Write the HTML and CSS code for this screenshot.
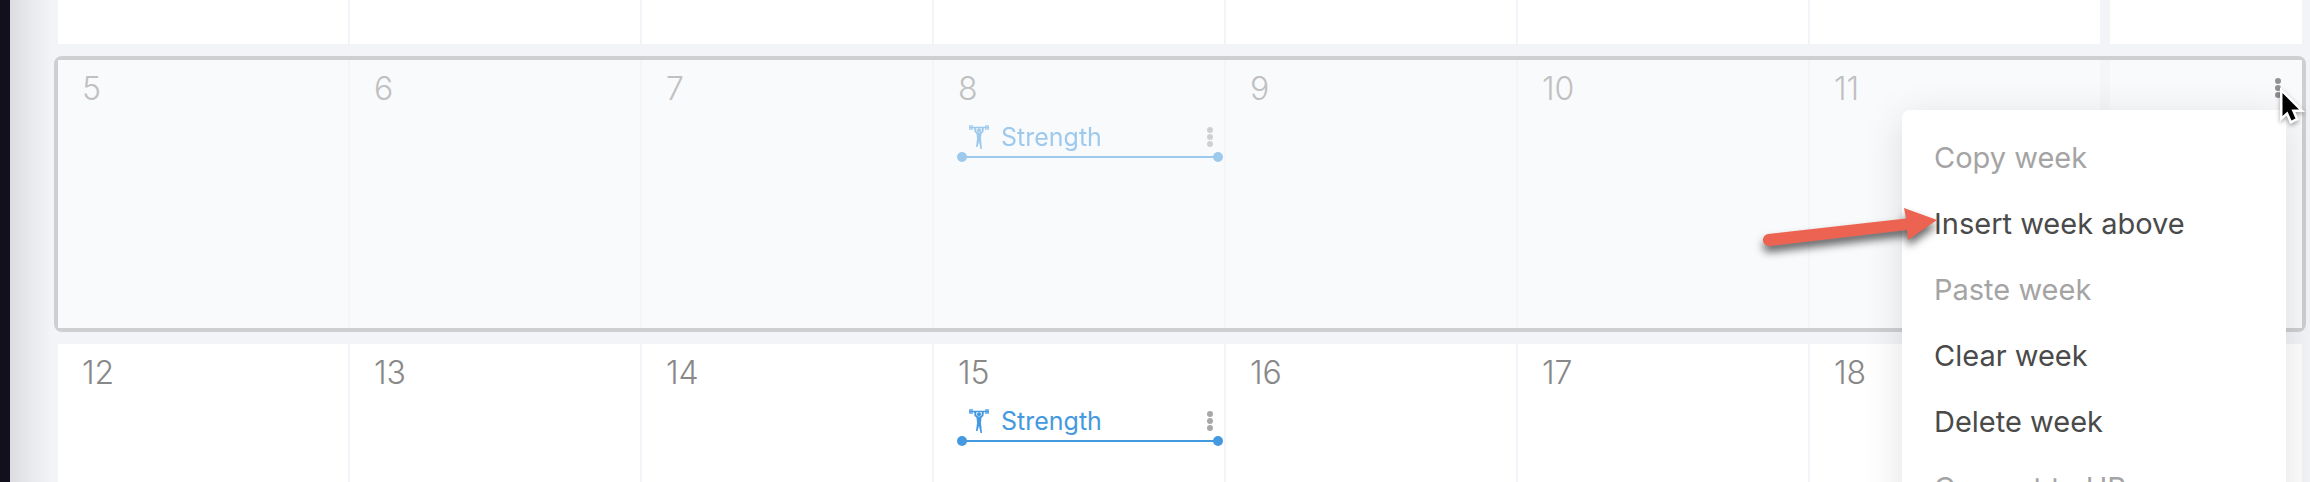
FILE: index.html
```html
<!DOCTYPE html>
<html lang="en">
<head>
<meta charset="utf-8">
<title>Training calendar</title>
<link rel="stylesheet" href="styles.css">
</head>
<body>
<svg class="sprite" aria-hidden="true">
  <symbol id="lifter" viewBox="0 0 20 24">
    <path d="M1 0V5M3 0V5M17 0V5M19 0V5M0 2.500H20" fill="none" stroke="currentColor" stroke-width="1.300"/>
    <path d="M6 2L6.500 6.500L9 8.500H11L13.500 6.500L14 2" fill="none" stroke="currentColor" stroke-width="2"/>
    <circle cx="10" cy="5.300" r="2"/>
    <path d="M7.500 8H12.500L12 14L13 24H11.500L10 17L8.500 22H7L8 14Z"/>
  </symbol>
  <symbol id="dots" viewBox="0 0 6 20">
    <circle cx="3" cy="3" r="3"/><circle cx="3" cy="10" r="3"/><circle cx="3" cy="17" r="3"/>
  </symbol>
</svg>
<div class="app">
  <nav class="rail" aria-label="Sidebar"></nav>
  <main class="calendar">
    <section class="week week-past">
      <div class="days"><div class="day"></div><div class="day"></div><div class="day"></div><div class="day"></div><div class="day"></div><div class="day"></div><div class="day"></div></div>
      <div class="summary"></div>
    </section>
    <section class="week week-selected">
      <div class="days">
        <div class="day"><span class="date">5</span></div>
        <div class="day"><span class="date">6</span></div>
        <div class="day"><span class="date">7</span></div>
        <div class="day"><span class="date">8</span>
          <div class="event"><svg class="lifter"><use href="#lifter"/></svg><span class="name">Strength</span><button class="more" aria-label="Strength options"><svg class="dots"><use href="#dots"/></svg></button></div>
        </div>
        <div class="day"><span class="date">9</span></div>
        <div class="day"><span class="date">10</span></div>
        <div class="day"><span class="date">11</span></div>
      </div>
      <div class="summary">
        <button class="week-more" aria-label="Week options"><svg class="dots"><use href="#dots"/></svg></button>
        <div class="menu">
          <button class="item" disabled>Copy week</button>
          <button class="item">Insert week above</button>
          <button class="item" disabled>Paste week</button>
          <button class="item">Clear week</button>
          <button class="item">Delete week</button>
          <button class="item" disabled>Convert to HR</button>
        </div>
        <svg class="arrow" viewBox="0 0 190 60" aria-hidden="true"><path d="M15 34L153 18.500L151 8L184 20L155 40L154 30L17 46A6 6 0 0 1 15 34Z"/></svg>
        <svg class="cursor" viewBox="0 0 26 36" aria-hidden="true"><path d="M3.500 4V27L8.500 22.500L12.500 31.500L16.500 29.500L12.500 20.500H20Z"/></svg>
      </div>
    </section>
    <section class="week">
      <div class="days">
        <div class="day"><span class="date">12</span></div>
        <div class="day"><span class="date">13</span></div>
        <div class="day"><span class="date">14</span></div>
        <div class="day"><span class="date">15</span>
          <div class="event"><svg class="lifter"><use href="#lifter"/></svg><span class="name">Strength</span><button class="more" aria-label="Strength options"><svg class="dots"><use href="#dots"/></svg></button></div>
        </div>
        <div class="day"><span class="date">16</span></div>
        <div class="day"><span class="date">17</span></div>
        <div class="day"><span class="date">18</span></div>
      </div>
      <div class="summary"></div>
    </section>
  </main>
</div>
</body>
</html>
```
FILE: styles.css
```css
* { box-sizing: border-box; }
body { margin: 0; font-family: Inter, "Open Sans", sans-serif; background: #f3f4f8; }
button { border: 0; padding: 0; background: none; font: inherit; color: inherit; }
.sprite { display: none; }
.app { display: flex; height: 100vh; overflow: hidden; }
.rail { flex: none; width: 10px; background: #11101c; }
.calendar {
  flex: 1;
  display: flex;
  flex-direction: column;
  gap: 16px;
  padding: 0 8px 0 48px;
  background: linear-gradient(90deg, #dddddf, #e8e9ed 20px, #f3f4f8 42px);
}
.week { flex: none; display: flex; gap: 10px; min-height: 268px; }
.week-past { min-height: 44px; }
.days { flex: 1; display: grid; grid-template-columns: repeat(7, 1fr); gap: 2px; background: #f3f4f9; }
.day { padding: 12px 0 0 24px; background: #fff; color: #888; }
.summary { position: relative; flex: none; width: 192px; background: #fff; }
.date { display: block; font-size: 32px; font-weight: 350; line-height: 34px; }
.event {
  position: relative;
  display: flex;
  align-items: center;
  height: 40px;
  margin: 12px 6px 0 4px;
  padding: 0 5px 0 7px;
  border-bottom: 2px solid #4499e0;
  color: #4499e0;
  fill: currentColor;
}
.event::before, .event::after {
  content: "";
  position: absolute;
  bottom: -6px;
  width: 10px;
  height: 10px;
  border-radius: 50%;
  background: #4499e0;
}
.event::before { left: -5px; }
.event::after { right: -5px; }
.lifter { width: 20px; height: 24px; }
.name { flex: 1; margin-left: 12px; font-size: 25px; }
.more { display: flex; color: #a8a8a8; }
.dots { width: 6px; height: 20px; fill: currentColor; }

.week-selected { background: #f5f6f8; border-radius: 4px; box-shadow: 0 0 0 4px #cecfd1; }
.week-selected .days { background: #f4f5f8; }
.week-selected .day, .week-selected .summary { background: #f9fafc; }
.week-selected .date { color: #c0c0c1; }
.week-selected .event { opacity: 0.5; }
.week-more { position: absolute; top: 18px; right: 21px; display: flex; color: #929294; }

.menu {
  position: absolute;
  z-index: 1;
  top: 50px;
  right: 16px;
  display: flex;
  flex-direction: column;
  width: 384px;
  padding: 15px 0;
  border-radius: 8px;
  background: #fff;
  box-shadow: 0 8px 40px rgba(0, 0, 0, 0.12);
}
.item { padding: 0 32px; font-size: 29px; line-height: 66px; text-align: left; color: #4a4a4a; }
.item:disabled { color: #a4a4a4; }
.arrow {
  position: absolute;
  z-index: 2;
  top: 140px;
  right: 359px;
  width: 190px;
  height: 60px;
  overflow: visible;
  fill: #ed6352;
  filter: drop-shadow(0 6px 4px rgba(0, 0, 0, 0.6));
}
.cursor {
  position: absolute;
  z-index: 2;
  top: 29px;
  right: -3px;
  width: 26px;
  height: 36px;
  overflow: visible;
  fill: #000;
  stroke: #fff;
  stroke-width: 5;
  paint-order: stroke;
  filter: drop-shadow(0 2px 2px rgba(0, 0, 0, 0.35));
}
```
